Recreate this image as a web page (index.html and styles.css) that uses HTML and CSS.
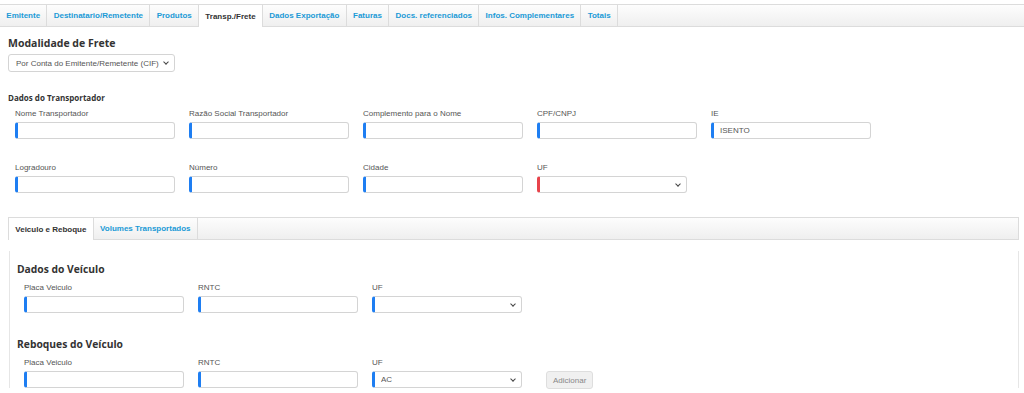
FILE: index.html
```html
<!DOCTYPE html>
<html lang="pt-BR">

<head>
    <meta charset="UTF-8">
    <meta name="viewport" content="width=device-width, initial-scale=1.0">
    <title>NF-e - Transp./Frete</title>
    <link rel="stylesheet" href="styles.css">
</head>

<body>
    <nav class="tabs">
        <a class="tab" href="#">Emitente</a>
        <a class="tab" href="#">Destinatario/Remetente</a>
        <a class="tab" href="#">Produtos</a>
        <a class="tab active" href="#">Transp./Frete</a>
        <a class="tab" href="#">Dados Exportação</a>
        <a class="tab" href="#">Faturas</a>
        <a class="tab" href="#">Docs. referenciados</a>
        <a class="tab" href="#">Infos. Complementares</a>
        <a class="tab" href="#">Totais</a>
    </nav>

    <div class="content">
        <h2 class="section-title">Modalidade de Frete</h2>
        <div class="select-wrap modalidade">
            <select class="field-select plain">
                <option>Por Conta do Emitente/Remetente (CIF)</option>
            </select>
        </div>

        <h4 class="group-title">Dados do Transportador</h4>
        <div class="form-grid">
            <div class="field">
                <label>Nome Transportador</label>
                <input class="field-input" type="text">
            </div>
            <div class="field">
                <label>Razão Social Transportador</label>
                <input class="field-input" type="text">
            </div>
            <div class="field">
                <label>Complemento para o Nome</label>
                <input class="field-input" type="text">
            </div>
            <div class="field">
                <label>CPF/CNPJ</label>
                <input class="field-input" type="text">
            </div>
            <div class="field">
                <label>IE</label>
                <input class="field-input" type="text" value="ISENTO">
            </div>
            <div class="field">
                <label>Logradouro</label>
                <input class="field-input" type="text">
            </div>
            <div class="field">
                <label>Número</label>
                <input class="field-input" type="text">
            </div>
            <div class="field">
                <label>Cidade</label>
                <input class="field-input" type="text">
            </div>
            <div class="field">
                <label>UF</label>
                <div class="select-wrap">
                    <select class="field-select invalid">
                        <option></option>
                    </select>
                </div>
            </div>
        </div>

        <nav class="subtabs">
            <a class="tab active" href="#">Veiculo e Reboque</a>
            <a class="tab" href="#">Volumes Transportados</a>
        </nav>

        <div class="subpanel">
            <h3 class="panel-title">Dados do Veículo</h3>
            <div class="form-row">
                <div class="field">
                    <label>Placa Veiculo</label>
                    <input class="field-input" type="text">
                </div>
                <div class="field">
                    <label>RNTC</label>
                    <input class="field-input" type="text">
                </div>
                <div class="field">
                    <label>UF</label>
                    <div class="select-wrap">
                        <select class="field-select">
                            <option></option>
                        </select>
                    </div>
                </div>
            </div>

            <h3 class="panel-title">Reboques do Veículo</h3>
            <div class="form-row">
                <div class="field">
                    <label>Placa Veiculo</label>
                    <input class="field-input" type="text">
                </div>
                <div class="field">
                    <label>RNTC</label>
                    <input class="field-input" type="text">
                </div>
                <div class="field">
                    <label>UF</label>
                    <div class="select-wrap">
                        <select class="field-select">
                            <option>AC</option>
                        </select>
                    </div>
                </div>
                <button class="btn-add" type="button">Adicionar</button>
            </div>
        </div>
    </div>
</body>

</html>
```

FILE: styles.css
```css
body {
    margin: 0;
    padding-top: 4px;
    background: #fff;
    font-family: "Liberation Sans", Arial, sans-serif;
    color: #333;
}

/* tab bars */
.tabs,
.subtabs {
    display: flex;
    height: 21px;
    border-top: 1px solid #dcdcdc;
    border-bottom: 1px solid #dcdcdc;
    background: linear-gradient(#fdfdfd, #efefef);
}

.subtabs {
    margin: 24px 5px 0 0;
    border-left: 1px solid #dcdcdc;
    border-right: 1px solid #dcdcdc;
}

.tab {
    display: flex;
    align-items: center;
    padding: 0 6.3px;
    border-right: 1px solid #dcdcdc;
    font-size: 8px;
    font-weight: bold;
    color: #1b9ad6;
    text-decoration: none;
    white-space: nowrap;
}

.tab.active {
    background: #fff;
    color: #333;
    margin-bottom: -1px;
}

.content {
    padding: 0 0 0 8px;
}

.section-title {
    margin: 9px 0 4px;
    font-family: "Open Sans", sans-serif;
    font-size: 10.5px;
    font-weight: bold;
    color: #333;
}

.group-title {
    margin: 20px 0 6px;
    font-family: "Open Sans", sans-serif;
    font-size: 8px;
    font-weight: bold;
    color: #333;
}

.panel-title {
    margin: 0 0 7px;
    font-family: "Open Sans", sans-serif;
    font-size: 10.3px;
    font-weight: bold;
    color: #333;
}

/* form fields */
.form-grid {
    display: grid;
    grid-template-columns: repeat(5, 174px);
    row-gap: 24px;
    padding-left: 7px;
}

.form-row {
    display: flex;
    align-items: flex-end;
    padding-left: 7px;
    margin-bottom: 24px;
}

.form-row .field {
    width: 174px;
}

.field label {
    display: block;
    height: 12px;
    margin-bottom: 1px;
    font-size: 8px;
    color: #555;
}

.field-input,
.field-select {
    box-sizing: border-box;
    display: block;
    width: 160px;
    height: 17px;
    margin: 0;
    padding: 0 6px;
    border: 1px solid #d4d4d4;
    border-left: 3px solid #1e7ef2;
    border-radius: 3px;
    background: #fff;
    font-family: "Liberation Sans", Arial, sans-serif;
    font-size: 8px;
    color: #555;
    outline: none;
}

.field-select {
    width: 150px;
    appearance: none;
    -webkit-appearance: none;
}

.field-select.invalid {
    border-left-color: #e8434b;
}

.field-select.plain {
    width: 167px;
    height: 18px;
    border-left: 1px solid #d4d4d4;
    padding-left: 7px;
}

.select-wrap {
    position: relative;
    width: max-content;
}

.select-wrap::after {
    content: "";
    position: absolute;
    right: 7px;
    top: 6px;
    width: 3px;
    height: 3px;
    border-right: 1px solid #444;
    border-bottom: 1px solid #444;
    transform: rotate(45deg);
    pointer-events: none;
}

/* inner panel */
.subpanel {
    margin: 11px 5px 0 1px;
    padding: 11px 0 0 7px;
    border-left: 1px solid #e6e6e6;
    border-right: 1px solid #e6e6e6;
}

.btn-add {
    height: 18px;
    margin: 0 0 -1px 0;
    padding: 0 6px;
    border: 1px solid #dedede;
    border-radius: 3px;
    background: #f0f0f0;
    font-family: "Liberation Sans", Arial, sans-serif;
    font-size: 8px;
    color: #888;
}
```
